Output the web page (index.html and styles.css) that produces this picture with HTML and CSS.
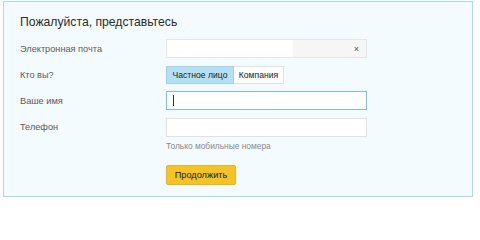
FILE: index.html
```html
<!DOCTYPE html>
<html lang="ru">
<head>
<meta charset="utf-8">
<link rel="stylesheet" href="styles.css">
</head>
<body>
<div class="panel">
  <h1 class="title">Пожалуйста, представьтесь</h1>
  <div class="form">
    <div class="label">Электронная почта</div>
    <div class="field email"><span class="autofill"></span><span class="clear">×</span></div>

    <div class="label">Кто вы?</div>
    <div class="toggle">
      <span class="opt active">Частное лицо</span><span class="opt">Компания</span>
    </div>

    <div class="label">Ваше имя</div>
    <div class="field focus"><span class="caret"></span></div>

    <div class="label">Телефон</div>
    <div class="field"></div>

    <div></div>
    <div class="hint">Только мобильные номера</div>

    <div></div>
    <div class="actions"><span class="btn">Продолжить</span></div>
  </div>
</div>
</body>
</html>
```

FILE: styles.css
```css
html, body {
  margin: 0;
  padding: 0;
  background: #ffffff;
  font-family: "Liberation Sans", Arial, sans-serif;
}
.panel {
  margin: 1px 0 0 3px;
  width: 468px;
  height: 194px;
  border: 1px solid #b3d9e3;
  background: #f4fbfe;
}
.title {
  margin: 11px 0 0 16px;
  font-size: 12.2px;
  line-height: 18px;
  font-weight: normal;
  color: #2b2b2b;
}
.form {
  margin: 8px 0 0 16px;
  display: grid;
  grid-template-columns: 146px 201px;
  grid-template-rows: 19px 18px 19px 19px 13px 21px;
  row-gap: 7.5px;
  align-items: center;
}
.label {
  font-size: 9.2px;
  color: #5a5a5a;
  line-height: 12px;
}
.field {
  height: 19px;
  box-sizing: border-box;
  border: 1px solid #e1e1e1;
  background: #ffffff;
  display: flex;
  align-items: center;
}
.email {
  background: #f6f6f6;
  border-color: #e6e6e6;
}
.autofill {
  width: 126px;
  height: 100%;
  background: #ffffff;
}
.clear {
  margin-left: auto;
  margin-right: 7px;
  font-size: 9px;
  color: #555;
  line-height: 10px;
}
.toggle {
  display: flex;
  height: 18px;
}
.opt {
  display: flex;
  align-items: center;
  justify-content: center;
  box-sizing: border-box;
  width: 50px;
  white-space: nowrap;
  font-size: 8.6px;
  color: #222;
  background: #ffffff;
  border: 1px solid #e3e3e3;
  border-left: none;
}
.opt.active {
  width: 68px;
  background: #b4e0f4;
  border: 1px solid #a3d2e6;
}
.focus {
  border-color: #86bcd0;
  background: #fffffd;
}
.caret {
  width: 1px;
  height: 11px;
  background: #333;
  margin-left: 6px;
}
.hint {
  font-size: 8.4px;
  line-height: 10px;
  color: #8a8a8a;
  align-self: start;
  margin-top: -3px;
}
.actions {
  display: flex;
}
.btn {
  display: flex;
  align-items: center;
  justify-content: center;
  width: 70px;
  height: 20px;
  box-sizing: border-box;
  background: #f4c326;
  border: 1px solid #e8b520;
  border-radius: 2px;
  font-size: 9.2px;
  color: #222;
}
```
